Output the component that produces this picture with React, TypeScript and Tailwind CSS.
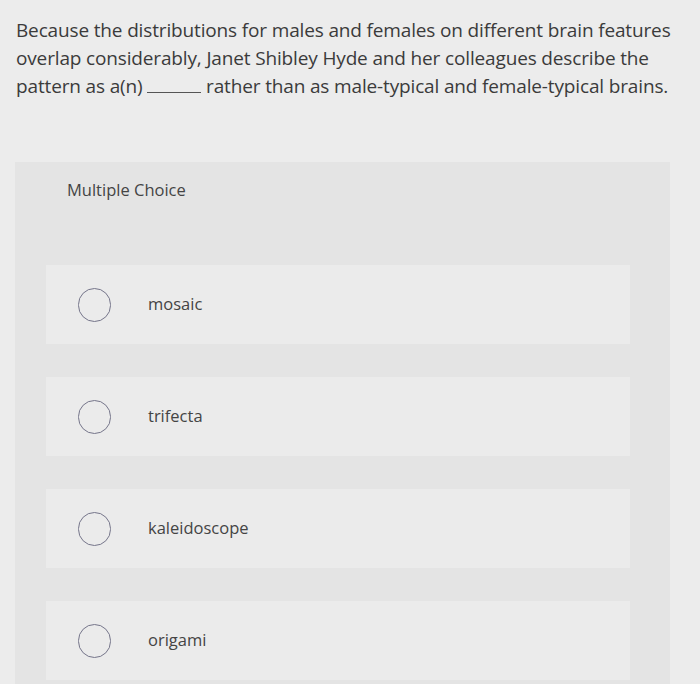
import React from 'react';

const OPTIONS = ['mosaic', 'trifecta', 'kaleidoscope', 'origami'];

export default function App() {
  return (
    <div className="w-[700px] h-[684px] overflow-hidden bg-[#ececec] font-['Open_Sans',sans-serif] text-[#3b3b3b]">
      <p className="pl-4 pt-4 text-[19px] leading-[28px] whitespace-nowrap tracking-[-0.15px]">
        Because the distributions for males and females on different brain features
        <br />
        overlap considerably, Janet Shibley Hyde and her colleagues describe the
        <br />
        pattern as a(n){' '}
        <span className="inline-block w-[54px] border-b border-[#555] align-baseline" />{' '}
        rather than as male-typical and female-typical brains.
      </p>

      <div className="mt-[62px] ml-[15px] w-[655px] h-[600px] bg-[#e4e4e4]">
        <div className="h-[60px] pl-[52px] pt-[16px] text-[16.5px] text-[#444]">Multiple Choice</div>
        <div className="flex flex-col gap-[33px] pl-[31px] pr-[40px] pt-[43px]">
          {OPTIONS.map((opt) => (
            <div key={opt} className="h-[79px] bg-[#ebebeb] flex items-center">
              <span className="ml-[32px] w-[33px] h-[34px] rounded-full border-[1.5px] border-[#75758a] shrink-0" />
              <span className="ml-[37px] text-[16.5px] text-[#444]">{opt}</span>
            </div>
          ))}
        </div>
      </div>
    </div>
  );
}
